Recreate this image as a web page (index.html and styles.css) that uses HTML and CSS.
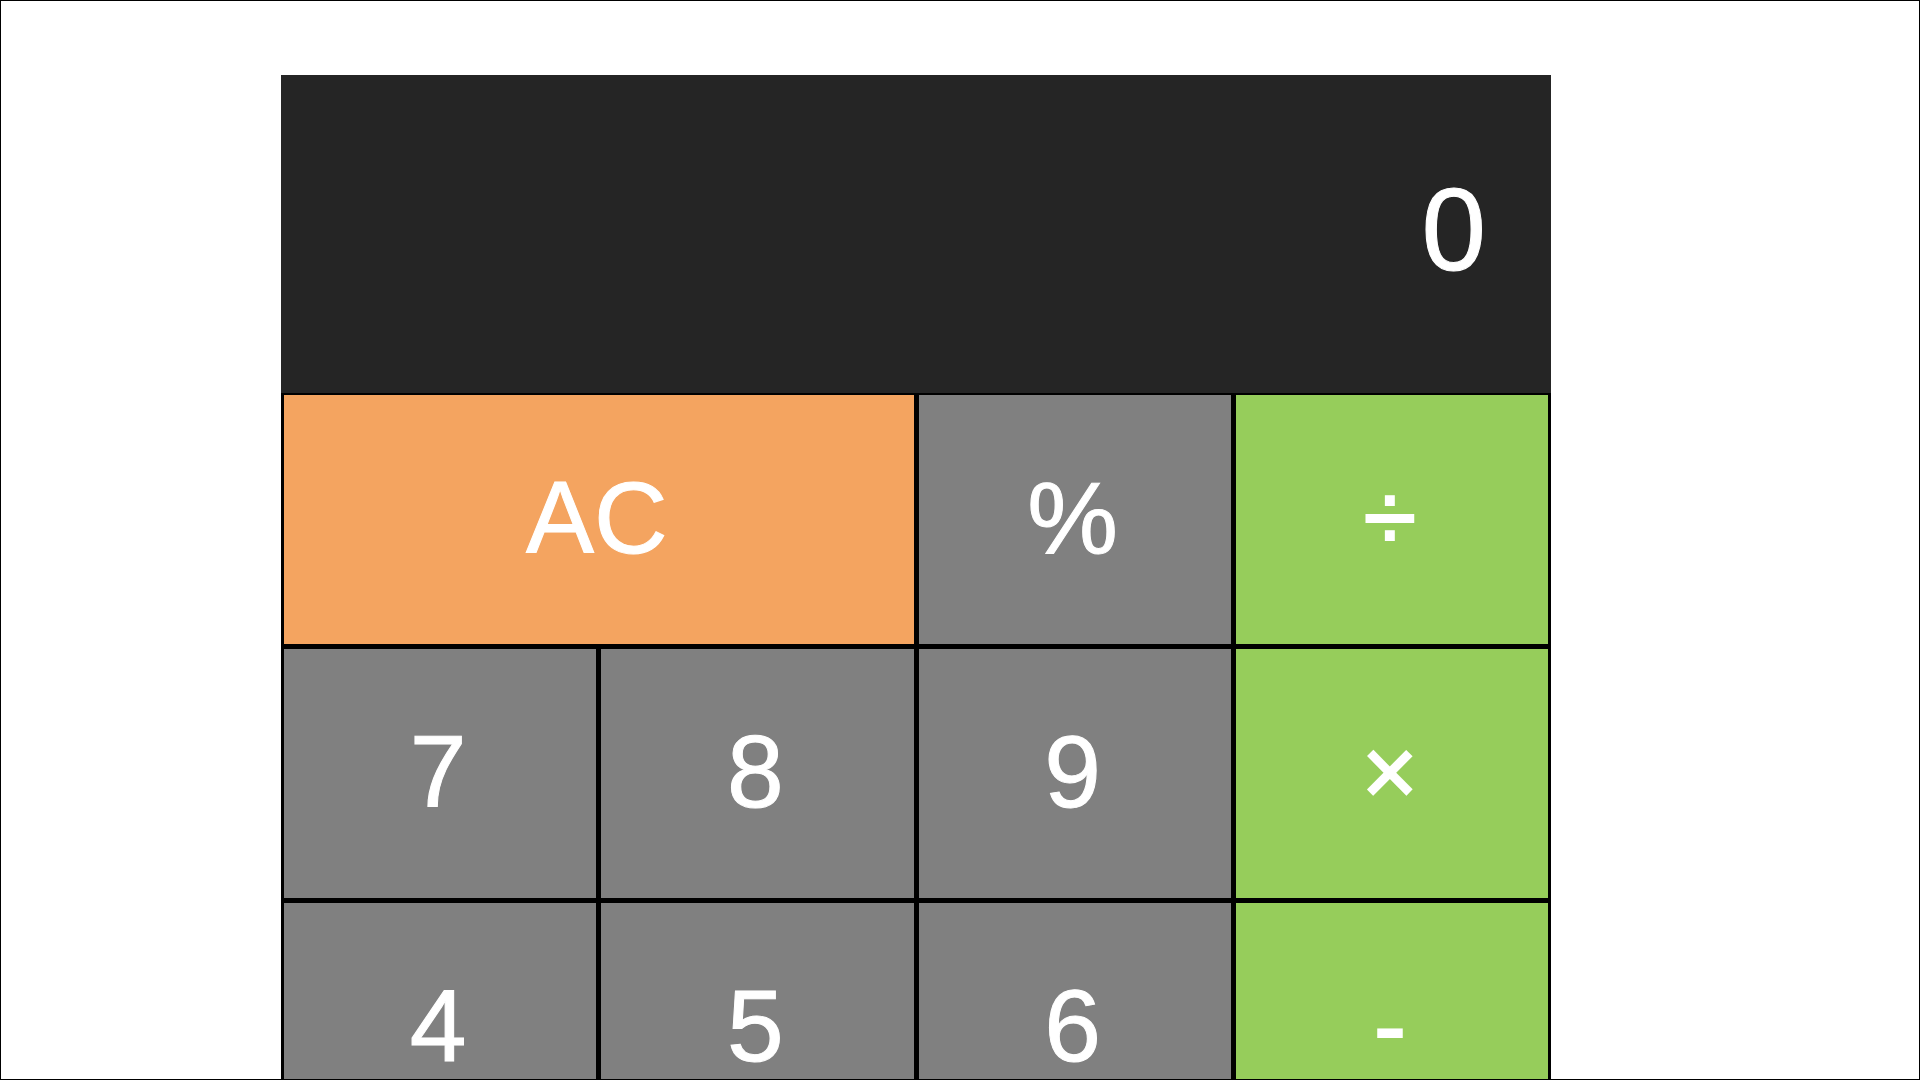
FILE: index.html
```html
<!DOCTYPE html>
<html lang="en">
<head>
  <meta charset="utf-8">
  <title>Calculator</title>
  <link rel="stylesheet" href="styles.css">
</head>
<body>
  <main class="page">
    <section class="calculator" aria-label="Calculator">
      <output class="display" aria-label="Result">0</output>
      <div class="keys">
        <button type="button" class="key key-clear">AC</button>
        <button type="button" class="key">%</button>
        <button type="button" class="key key-operator">÷</button>
        <button type="button" class="key">7</button>
        <button type="button" class="key">8</button>
        <button type="button" class="key">9</button>
        <button type="button" class="key key-operator">×</button>
        <button type="button" class="key">4</button>
        <button type="button" class="key">5</button>
        <button type="button" class="key">6</button>
        <button type="button" class="key key-operator">-</button>
      </div>
    </section>
  </main>
</body>
</html>
```
FILE: styles.css
```css
* {
  box-sizing: border-box;
}

body {
  margin: 0;
  background: #fff;
  font-family: "Liberation Sans", Arial, sans-serif;
}

.page {
  display: grid;
  grid-template-columns: 280fr 1270fr 368fr;
  align-items: start;
  height: 100vh;
  padding-top: 74px;
  border: 1px solid #000;
  overflow: hidden;
}

.calculator {
  grid-column: 2;
  color: #fff;
}

.display {
  display: flex;
  align-items: center;
  justify-content: flex-end;
  height: 318px;
  padding: 0 65px 8px 0;
  background: #252525;
  font-size: 116px;
  line-height: 1;
  -webkit-text-stroke: 1px #fff;
}

.keys {
  display: grid;
  grid-template-columns: repeat(4, 1fr);
  grid-auto-rows: 249px;
  gap: 5px;
  padding: 2px 3px;
  background: #000;
}

.key {
  margin: 0;
  padding: 0 4px 4px 0;
  border: 0;
  background: #808080;
  color: inherit;
  font: inherit;
  font-size: 102px;
  line-height: 1;
  -webkit-text-stroke: 1px #fff;
}

.key-clear {
  grid-column: span 2;
  background: #f4a460;
}

.key-operator {
  background: #96cd5b;
  font-size: 96px;
  -webkit-text-stroke: 2px #fff;
}
```
